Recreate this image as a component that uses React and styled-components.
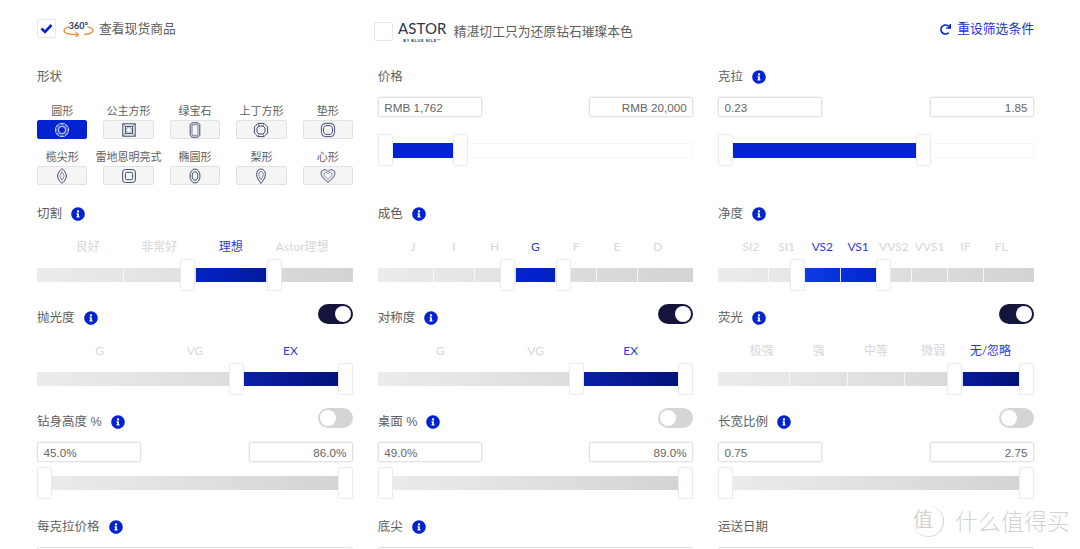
import React from 'react'
import styled, { createGlobalStyle } from 'styled-components'
import { FaInfoCircle, FaRedo } from 'react-icons/fa'

const BLUE = '#0323d2'
const SANS = '"Liberation Sans", "Noto Sans CJK SC", sans-serif'
const SOFT = 'Lato, "Noto Sans CJK SC", sans-serif'

const GlobalStyle = createGlobalStyle`
  html, body { margin: 0; padding: 0; background: #fff; overflow: hidden; }
  body { font-family: ${SANS}; color: #5e5e5e; }
`

const Page = styled.div`
  position: relative;
  width: 1080px;
  height: 549px;
  box-sizing: border-box;
  padding: 0 46px 0 37px;
  overflow: hidden;
`

const TopBar = styled.div`
  display: grid;
  grid-template-columns: 316px 315.5px 316px;
  column-gap: 24.75px;
  height: 66px;
  box-sizing: border-box;
  padding-top: 19px;
`

const TopItem = styled.div`
  display: flex;
  align-items: flex-start;
  height: 24px;
  justify-content: ${({ $end }) => ($end ? 'flex-end' : 'flex-start')};
  margin: ${({ $shift }) => ($shift ? '3px 0 0 -4px' : '0')};
`

const CheckBox = styled.div`
  flex: none;
  width: 19px;
  height: 19px;
  box-sizing: border-box;
  display: flex;
  align-items: center;
  justify-content: center;
  background: #fff;
  border: 1.5px solid #e8e8e8;
  border-radius: 2px;
`

const Badge360 = styled.div`
  position: relative;
  width: 31px;
  height: 19px;
  margin: 0 5px 0 7px;
  font: bold 9px/10px ${SOFT};
  color: #273a68;
  text-align: center;
  padding-top: 2px;
  box-sizing: border-box;
`

const BadgeArc = styled.svg`
  position: absolute;
  left: 0;
  top: 6px;
`

const TopText = styled.span`
  font-size: 12.8px;
  line-height: 20px;
  color: #5e5e5e;
`

const LogoWrap = styled.div`
  width: 49px;
  margin: -3px 7px 0 5px;
  color: #2a3550;
  text-align: center;
`

const LogoName = styled.div`
  font: 400 15px/19px ${SOFT};
  letter-spacing: 0.1px;
`

const LogoSub = styled.div`
  font: bold 3.8px/6px ${SANS};
  letter-spacing: 0.6px;
  white-space: nowrap;
`

const ResetLink = styled.a`
  display: flex;
  align-items: center;
  gap: 6px;
  font-size: 12.8px;
  line-height: 20px;
  color: #2233d4;
  svg { color: ${BLUE}; }
`

const FilterGrid = styled.div`
  display: grid;
  grid-template-columns: 316px 315.5px 316px;
  grid-template-rows: 137px 104px 104px 105px 40px;
  column-gap: 24.75px;
`

const FilterBox = styled.section`
  display: flex;
  flex-direction: column;
  min-width: 0;
`

const LabelRow = styled.div`
  display: flex;
  align-items: flex-start;
  justify-content: space-between;
  height: 20px;
`

const LabelText = styled.div`
  display: flex;
  align-items: center;
  gap: 9px;
  padding-top: 1px;
  font-size: 12.5px;
  line-height: 20px;
  color: #5e5e5e;
  svg { color: ${BLUE}; margin-top: -1px; }
`

const Toggle = styled.div`
  width: 35px;
  height: 20px;
  margin-top: -3px;
  box-sizing: border-box;
  padding: 2px;
  border-radius: 10px;
  display: flex;
  justify-content: ${({ $on }) => ($on ? 'flex-end' : 'flex-start')};
  background: ${({ $on }) => ($on ? '#14143c' : '#d4d5d7')};
  &::after {
    content: '';
    width: 16px;
    height: 16px;
    border-radius: 50%;
    background: #fff;
  }
`

const ShapeGrid = styled.div`
  display: grid;
  grid-template-columns: repeat(5, 1fr);
  column-gap: 16px;
  row-gap: 10px;
  margin-top: 17px;
`

const ShapeCell = styled.div`
  display: flex;
  flex-direction: column;
  align-items: center;
  min-width: 0;
`

const ShapeName = styled.div`
  height: 17px;
  font-size: 11px;
  line-height: 17px;
  color: #5e5e5e;
  white-space: nowrap;
`

const ShapeButton = styled.div`
  width: 100%;
  height: 19px;
  box-sizing: border-box;
  display: flex;
  align-items: center;
  justify-content: center;
  border-radius: 2px;
  background: ${({ $active }) => ($active ? BLUE : '#f5f5f5')};
  border: 1px solid ${({ $active }) => ($active ? BLUE : '#e2e2e2')};
  color: ${({ $active }) => ($active ? '#c9d2f7' : '#3f4a70')};
`

const ValueRow = styled.div`
  display: flex;
  justify-content: space-between;
  margin-top: ${({ $top }) => $top}px;
`

const ValueBox = styled.div`
  width: 104px;
  height: 20px;
  box-sizing: border-box;
  padding: 0 5.5px;
  border: 1px solid #e2e2e2;
  border-radius: 2px;
  box-shadow: 0 0 0 0.5px #eee;
  font-size: 11.7px;
  line-height: 19px;
  color: #666;
  text-align: ${({ $right }) => ($right ? 'right' : 'left')};
`

const ScaleRow = styled.div`
  display: flex;
  height: 20px;
  margin-top: 13px;
  padding: 0 15px;
`

const ScaleName = styled.div`
  flex: 1;
  min-width: 0;
  text-align: center;
  font: 12px/21px ${SOFT};
  white-space: nowrap;
  color: ${({ $active }) => ($active ? '#2a3be0' : '#d6d6d6')};
`

const Slider = styled.div`
  position: relative;
  height: 32px;
  display: flex;
  align-items: center;
  margin-top: ${({ $top }) => $top}px;
`

const Track = styled.div`
  position: relative;
  width: 100%;
  height: ${({ $empty }) => ($empty ? 15 : 14)}px;
  box-sizing: border-box;
  padding: 0 15px;
  background: ${({ $empty }) =>
    $empty ? '#fff' : 'linear-gradient(90deg, #ececec, #d2d3d5)'};
  box-shadow: ${({ $empty }) => ($empty ? 'inset 0 0 0 1px #f6f6f6' : 'none')};
`

const Fill = styled.div`
  position: absolute;
  top: 0;
  bottom: 0;
  left: calc(15px + (100% - 30px) * ${({ $from }) => $from});
  width: calc((100% - 30px) * ${({ $to, $from }) => $to - $from});
  background: linear-gradient(90deg, ${({ $c }) => $c[0]}, ${({ $c }) => $c[1]});
`

const Cells = styled.div`
  position: relative;
  display: flex;
  height: 100%;
`

const Cell = styled.div`
  flex: 1;
  & + & { border-left: 1.5px solid rgba(250, 250, 250, 0.9); }
`

const HandleLayer = styled.div`
  position: absolute;
  left: 15px;
  right: 15px;
  top: 0;
  bottom: 0;
`

const Handle = styled.div`
  position: absolute;
  top: 0;
  width: 15px;
  height: 32px;
  box-sizing: border-box;
  background: #fff;
  border: 1.5px solid #ebebeb;
  border-radius: 2px;
  left: ${({ $at }) => $at * 100}%;
  transform: ${({ $lead }) => ($lead ? 'translateX(-100%)' : 'none')};
`

const EmptyField = styled.div`
  height: 30px;
  margin-top: 11px;
  box-sizing: border-box;
  border: 1px solid #e2e2e2;
  border-radius: 2px;
`

const Watermark = styled.div`
  position: absolute;
  left: 913px;
  top: 506px;
  display: flex;
  align-items: center;
  color: rgba(170, 170, 170, 0.55);
  pointer-events: none;
`

const WatermarkSeal = styled.div`
  width: 30px;
  height: 30px;
  font-size: 20px;
  line-height: 29px;
  border-right: 1.5px solid rgba(170, 170, 170, 0.55);
  border-bottom: 1.5px solid rgba(170, 170, 170, 0.4);
  border-radius: 50%;
  margin-right: 11px;
`

const WatermarkText = styled.div`
  font-size: 23px;
  font-weight: 300;
  line-height: 30px;
`

const gems = {
  round: (
    <>
      <circle cx="8" cy="8" r="6.6" />
      <circle cx="8" cy="8" r="3.6" />
      <path d="M8 1.4 9.8 4.7 13 3.3 11.4 6.3 14.6 8 11.4 9.7 13 12.7 9.8 11.3 8 14.6 6.2 11.3 3 12.7 4.6 9.7 1.4 8 4.6 6.3 3 3.3 6.2 4.7Z" strokeWidth=".6" />
    </>
  ),
  princess: (
    <>
      <rect x="1.8" y="1.8" width="12.4" height="12.4" />
      <rect x="4.4" y="4.4" width="7.2" height="7.2" />
      <path d="M1.8 1.8 4.4 4.4M14.2 1.8 11.6 4.4M1.8 14.2 4.4 11.6M14.2 14.2 11.6 11.6M8 4.4 11.6 8 8 11.6 4.4 8Z" strokeWidth=".6" />
    </>
  ),
  emerald: (
    <>
      <path d="M5 .8H11L12.8 2.6V13.4L11 15.2H5L3.2 13.4V2.6Z" />
      <rect x="5" y="2.8" width="6" height="10.4" strokeWidth=".7" />
    </>
  ),
  asscher: (
    <>
      <path d="M5 1.4H11L14.6 5V11L11 14.6H5L1.4 11V5Z" />
      <path d="M6 4H10L12 6V10L10 12H6L4 10V6Z" />
      <path d="M5 1.4 6 4M11 1.4 10 4M5 14.6 6 12M11 14.6 10 12" strokeWidth=".6" />
    </>
  ),
  cushion: (
    <>
      <rect x="1.4" y="1.4" width="13.2" height="13.2" rx="4" />
      <path d="M5.5 3.6H10.5L12.4 5.5V10.5L10.5 12.4H5.5L3.6 10.5V5.5Z" />
    </>
  ),
  marquise: (
    <>
      <path d="M8 .6C11 3.4 12.4 5.6 12.4 8S11 12.6 8 15.4C5 12.6 3.6 10.4 3.6 8S5 3.4 8 .6Z" />
      <path d="M8 3.6 10.2 8 8 12.4 5.8 8Z" strokeWidth=".6" />
    </>
  ),
  radiant: (
    <>
      <rect x="1.6" y="1.6" width="12.8" height="12.8" rx="2.6" />
      <rect x="4.4" y="4.4" width="7.2" height="7.2" rx="1" />
    </>
  ),
  oval: (
    <>
      <ellipse cx="8" cy="8" rx="5" ry="7" />
      <ellipse cx="8" cy="8" rx="2.8" ry="4.2" />
    </>
  ),
  pear: (
    <>
      <path d="M8 15.4C5.6 12.4 3.6 9.6 3.6 6.4 3.6 3.2 5.6 1 8 1S12.4 3.2 12.4 6.4C12.4 9.6 10.4 12.4 8 15.4Z" />
      <path d="M8 3.4C9.4 3.4 10.2 4.8 10.2 6.4S9.2 9.8 8 11.6C6.8 9.8 5.8 8 5.8 6.4S6.6 3.4 8 3.4Z" strokeWidth=".7" />
    </>
  ),
  heart: (
    <>
      <path d="M8 14.2C4 11.2 1.2 8.6 1.2 5.4 1.2 3.2 2.8 1.8 4.8 1.8 6.2 1.8 7.4 2.6 8 3.6 8.6 2.6 9.8 1.8 11.2 1.8 13.2 1.8 14.8 3.2 14.8 5.4 14.8 8.6 12 11.2 8 14.2Z" />
      <path d="M8 11.2C5.8 9.6 4 8 4 6 4 5 4.8 4.4 5.8 4.4 6.8 4.4 7.6 5 8 5.8 8.4 5 9.2 4.4 10.2 4.4 11.2 4.4 12 5 12 6 12 8 10.2 9.6 8 11.2Z" strokeWidth=".6" />
    </>
  ),
}

const Gem = ({ kind }) => (
  <svg width="16" height="16" viewBox="0 0 16 16" fill="none" stroke="currentColor" strokeWidth="1">
    {gems[kind]}
  </svg>
)

const shapes = [
  ['圆形', 'round'],
  ['公主方形', 'princess'],
  ['绿宝石', 'emerald'],
  ['上丁方形', 'asscher'],
  ['垫形', 'cushion'],
  ['榄尖形', 'marquise'],
  ['雷地恩明亮式', 'radiant'],
  ['椭圆形', 'oval'],
  ['梨形', 'pear'],
  ['心形', 'heart'],
]

const Label = ({ text, info, toggle }) => (
  <LabelRow>
    <LabelText>
      {text}
      {info && <FaInfoCircle size={14} />}
    </LabelText>
    {toggle !== undefined && <Toggle $on={toggle} />}
  </LabelRow>
)

// from / to are fractions of the inner width, between the two handle gutters
const Range = ({ from, to, cells = 1, colors, empty, top }) => (
  <Slider $top={top}>
    <Track $empty={empty}>
      {colors && <Fill $from={from} $to={to} $c={colors} />}
      <Cells>
        {Array.from({ length: cells }, (_, i) => <Cell key={i} />)}
      </Cells>
    </Track>
    <HandleLayer>
      <Handle $at={from} $lead />
      <Handle $at={to} />
    </HandleLayer>
  </Slider>
)

const Values = ({ low, high, top }) => (
  <ValueRow $top={top}>
    <ValueBox>{low}</ValueBox>
    <ValueBox $right>{high}</ValueBox>
  </ValueRow>
)

const Scale = ({ names, from, to, colors, cells, toggle, info = true, title }) => {
  const first = Math.round(from * names.length)
  const last = Math.round(to * names.length)
  return (
    <FilterBox>
      <Label text={title} info={info} toggle={toggle} />
      <ScaleRow>
        {names.map((n, i) => (
          <ScaleName key={n} $active={i >= first && i < last}>{n}</ScaleName>
        ))}
      </ScaleRow>
      <Range from={from} to={to} cells={cells ?? names.length} colors={colors} top={3} />
    </FilterBox>
  )
}

const Measure = ({ title, low, high, toggle }) => (
  <FilterBox>
    <Label text={title} info toggle={toggle} />
    <Values low={low} high={high} top={11} />
    <Range from={0} to={1} cells={1} top={5} />
  </FilterBox>
)

export default function App() {
  return (
    <Page>
      <GlobalStyle />
      <TopBar>
        <TopItem>
          <CheckBox>
            <svg width="13" height="11" viewBox="0 0 13 11">
              <path d="M1.5 5.5 5 9l6.5-7" fill="none" stroke={BLUE} strokeWidth="2.6" />
            </svg>
          </CheckBox>
          <Badge360>
            360°
            <BadgeArc width="31" height="13" viewBox="0 0 32 13" fill="none" stroke="#ee8a2e" strokeWidth="1.4">
              <path d="M7 1.5C3 2.5 1 4 1 5.5 1 8 6.5 9.6 14 9.8" />
              <path d="M25 1.5C29 2.5 31 4 31 5.5 31 7.5 27 9 22 9.6" />
              <path d="M13 7.6 16 9.8 13 12" />
            </BadgeArc>
          </Badge360>
          <TopText>查看现货商品</TopText>
        </TopItem>
        <TopItem $shift>
          <CheckBox />
          <LogoWrap>
            <LogoName>ASTOR</LogoName>
            <LogoSub>BY BLUE NILE™</LogoSub>
          </LogoWrap>
          <TopText>精湛切工只为还原钻石璀璨本色</TopText>
        </TopItem>
        <TopItem $end>
          <ResetLink>
            <FaRedo size={11} />
            重设筛选条件
          </ResetLink>
        </TopItem>
      </TopBar>

      <FilterGrid>
        <FilterBox>
          <Label text="形状" />
          <ShapeGrid>
            {shapes.map(([name, kind], i) => (
              <ShapeCell key={name}>
                <ShapeName>{name}</ShapeName>
                <ShapeButton $active={i === 0}><Gem kind={kind} /></ShapeButton>
              </ShapeCell>
            ))}
          </ShapeGrid>
        </FilterBox>
        <FilterBox>
          <Label text="价格" />
          <Values low="RMB 1,762" high="RMB 20,000" top={11} />
          <Range empty from={0} to={0.21} colors={[BLUE, BLUE]} top={17} />
        </FilterBox>
        <FilterBox>
          <Label text="克拉" info />
          <Values low="0.23" high="1.85" top={11} />
          <Range empty from={0} to={0.64} colors={[BLUE, BLUE]} top={17} />
        </FilterBox>

        <Scale title="切割" names={['良好', '非常好', '理想', 'Astor理想']} from={0.5} to={0.75} colors={['#0323c8', '#031a9c']} />
        <Scale title="成色" names={['J', 'I', 'H', 'G', 'F', 'E', 'D']} from={3 / 7} to={4 / 7} colors={['#0323d2', '#0320c0']} />
        <Scale title="净度" names={['SI2', 'SI1', 'VS2', 'VS1', 'VVS2', 'VVS1', 'IF', 'FL']} from={0.25} to={0.5} colors={['#0c3ce4', '#0325d0']} />

        <Scale title="抛光度" toggle names={['G', 'VG', 'EX']} from={0.67} to={1} cells={1} colors={['#0a1fa8', '#02137a']} />
        <Scale title="对称度" toggle names={['G', 'VG', 'EX']} from={0.67} to={1} cells={1} colors={['#0a1fa8', '#02137a']} />
        <Scale title="荧光" toggle names={['极强', '强', '中等', '微弱', '无/忽略']} from={0.8} to={1} colors={['#061c9c', '#021278']} />

        <Measure title="钻身高度 %" low="45.0%" high="86.0%" toggle={false} />
        <Measure title="桌面 %" low="49.0%" high="89.0%" toggle={false} />
        <Measure title="长宽比例" low="0.75" high="2.75" toggle={false} />

        <FilterBox>
          <Label text="每克拉价格" info />
          <EmptyField />
        </FilterBox>
        <FilterBox>
          <Label text="底尖" info />
          <EmptyField />
        </FilterBox>
        <FilterBox>
          <Label text="运送日期" />
          <EmptyField />
        </FilterBox>
      </FilterGrid>

      <Watermark>
        <WatermarkSeal>值</WatermarkSeal>
        <WatermarkText>什么值得买</WatermarkText>
      </Watermark>
    </Page>
  )
}
